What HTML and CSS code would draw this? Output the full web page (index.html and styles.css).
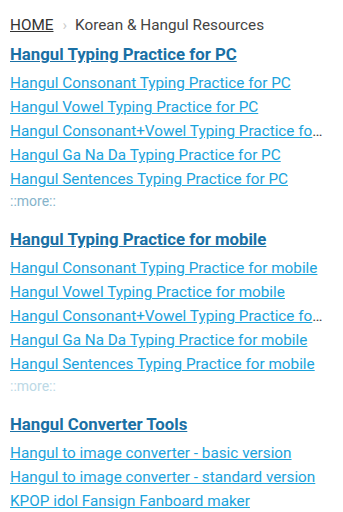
FILE: index.html
```html
<!DOCTYPE html>
<html lang="en">
<head>
    <meta charset="UTF-8">
    <meta name="viewport" content="width=device-width, initial-scale=1.0">
    <title>Korean &amp; Hangul Resources</title>
    <link rel="stylesheet" href="styles.css">
</head>
<body>
<!-- Breadcrumb -->
    <div class="crumbs">
        <a href="#" class="home">HOME</a>
        <span class="sep">&#8250;</span>
        <span class="here">Korean &amp; Hangul Resources</span>
    </div>

    <!-- PC -->
    <div class="group">
        <h2><a href="#">Hangul Typing Practice for PC</a></h2>
        <ul>
            <li><a href="#">Hangul Consonant Typing Practice for PC</a></li>
            <li><a href="#">Hangul Vowel Typing Practice for PC</a></li>
            <li><a href="#">Hangul Consonant+Vowel Typing Practice for PC</a></li>
            <li><a href="#">Hangul Ga Na Da Typing Practice for PC</a></li>
            <li><a href="#">Hangul Sentences Typing Practice for PC</a></li>
        </ul>
        <a href="#" class="more">::more::</a>
    </div>

    <!-- mobile -->
    <div class="group">
        <h2><a href="#">Hangul Typing Practice for mobile</a></h2>
        <ul>
            <li><a href="#">Hangul Consonant Typing Practice for mobile</a></li>
            <li><a href="#">Hangul Vowel Typing Practice for mobile</a></li>
            <li><a href="#">Hangul Consonant+Vowel Typing Practice for mobile</a></li>
            <li><a href="#">Hangul Ga Na Da Typing Practice for mobile</a></li>
            <li><a href="#">Hangul Sentences Typing Practice for mobile</a></li>
        </ul>
        <a href="#" class="more faded">::more::</a>
    </div>

    <!-- converters -->
    <div class="group">
        <h2><a href="#">Hangul Converter Tools</a></h2>
        <ul>
            <li><a href="#">Hangul to image converter - basic version</a></li>
            <li><a href="#">Hangul to image converter - standard version</a></li>
            <li><a href="#">KPOP idol Fansign Fanboard maker</a></li>
        </ul>
    </div>
</body>
</html>
```

FILE: styles.css
```css
body {
    margin: 0;
    padding: 13px 17px 0 10px;
    font-family: Roboto, Arial, sans-serif;
    color: #444;
    background: #fff;
}
.crumbs {
    font-size: 15.3px;
    line-height: 24px;
    display: flex;
    align-items: center;
}
.crumbs .home {
    color: #333;
}
.crumbs .sep {
    color: #ccc;
    margin: 0 8px 0 9px;
}
.crumbs .here {
    color: #444;
}
.group {
    margin-bottom: 18px;
}
h2 {
    font-size: 16.8px;
    line-height: 20px;
    margin: 7px 0 7px;
}
h2 a {
    color: #1a70a5;
}
ul {
    list-style: none;
    margin: 0;
    padding: 0;
}
li {
    font-size: 15.3px;
    line-height: 24px;
    white-space: nowrap;
    overflow: hidden;
    text-overflow: ellipsis;
}
li a {
    color: #1ba3dc;
}
.more {
    display: block;
    font-size: 14px;
    line-height: 20px;
    color: #86b4cb;
    text-decoration: none;
}
.more.faded {
    color: #bcd9e6;
}
```
